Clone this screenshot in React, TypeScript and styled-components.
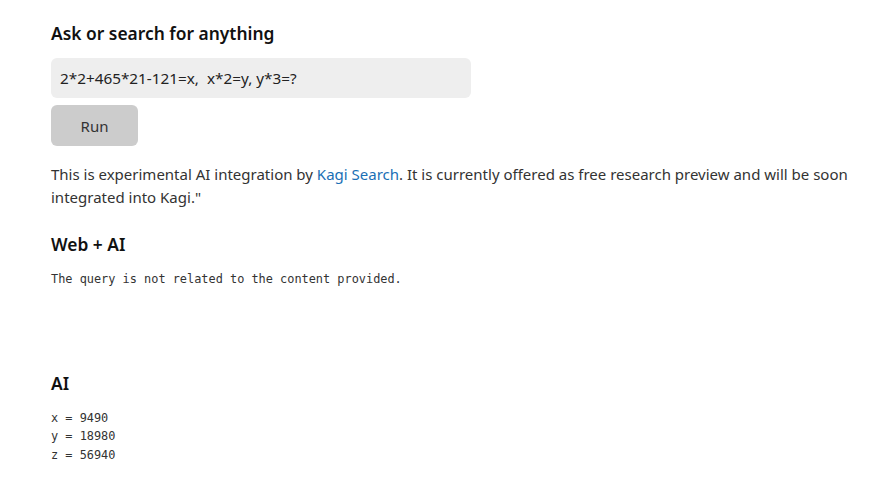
import React from "react";
import styled, { createGlobalStyle } from "styled-components";

const Global = createGlobalStyle`
  html, body { margin: 0; padding: 0; background: #fff; }
  body { font-family: "Noto Sans", "Open Sans", sans-serif; color: #222; }
`;

const Page = styled.main`
  padding: 20px 20px 0 51px;
  display: flex;
  flex-direction: column;
`;

const Heading = styled.h2`
  margin: 0;
  font-size: 17.4px;
  font-weight: 600;
  line-height: 26px;
  color: #111;
`;

const Input = styled.input`
  box-sizing: border-box;
  width: 420px;
  height: 40px;
  margin-top: 12px;
  border: none;
  border-radius: 6px;
  background: #eeeeee;
  padding: 0 9px;
  font-family: inherit;
  font-size: 15.3px;
  color: #222;
  outline: none;
`;

const Button = styled.button`
  width: 87px;
  height: 41px;
  margin-top: 7px;
  border: none;
  border-radius: 6px;
  background: #cccccc;
  font-family: inherit;
  font-size: 15px;
  color: #333;
`;

const Paragraph = styled.p`
  margin: 17px 0 0 0;
  font-size: 15px;
  line-height: 23px;
  color: #333;
  max-width: 805px;
`;

const Link = styled.a`
  color: #1a6fb5;
  text-decoration: none;
`;

const Section = styled.section<{ $top: number }>`
  margin-top: ${(p) => p.$top}px;
  display: flex;
  flex-direction: column;
`;

const Pre = styled.pre`
  margin: 13px 0 0 0;
  font-family: "DejaVu Sans Mono", "Liberation Mono", monospace;
  font-size: 11.9px;
  line-height: 18.5px;
  color: #333;
  white-space: pre-wrap;
`;

export default function App() {
  return (
    <>
      <Global />
      <Page>
        <Heading>Ask or search for anything</Heading>
        <Input defaultValue="2*2+465*21-121=x,  x*2=y, y*3=?" />
        <div>
          <Button>Run</Button>
        </div>
        <Paragraph>
          This is experimental AI integration by <Link href="#">Kagi Search</Link>. It is currently offered as free research preview and will be soon integrated into Kagi."
        </Paragraph>
        <Section $top={22}>
          <Heading>Web + AI</Heading>
          <Pre>The query is not related to the content provided.</Pre>
        </Section>
        <Section $top={81}>
          <Heading>AI</Heading>
          <Pre>{"x = 9490\ny = 18980\nz = 56940"}</Pre>
        </Section>
      </Page>
    </>
  );
}
